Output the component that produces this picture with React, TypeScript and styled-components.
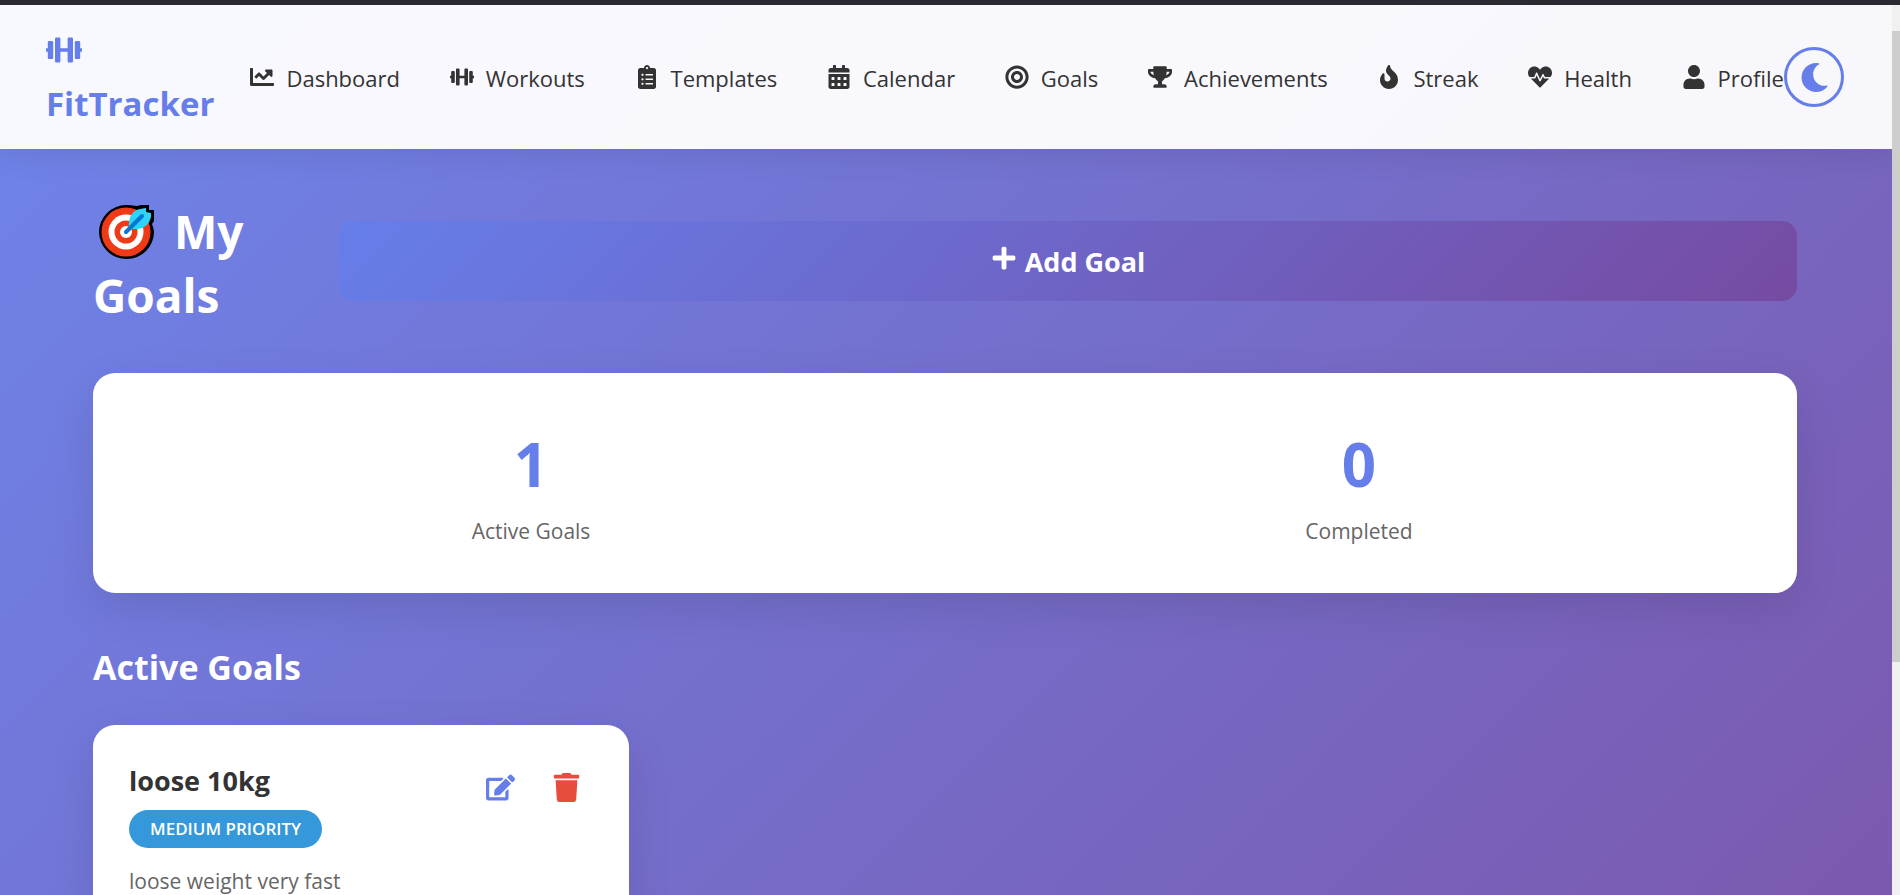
import React from 'react';
import styled, { createGlobalStyle } from 'styled-components';
import {
  FaBullseye, FaCalendarAlt, FaChartLine, FaClipboardList, FaDumbbell, FaEdit, FaFire,
  FaHeartbeat, FaMoon, FaPlus, FaTrash, FaTrophy, FaUser,
} from 'react-icons/fa';
import type { IconType } from 'react-icons';

const brand = '#667eea';

const GlobalStyle = createGlobalStyle`
  *, *::before, *::after { box-sizing: border-box; }
  body { margin: 0; font-family: 'Segoe UI', 'Open Sans', 'Noto Sans', sans-serif; color: #333; }
  h1, h2, h3, p, ul { margin: 0; padding: 0; }
  button { font-family: inherit; cursor: pointer; }
`;

const Screen = styled.div`
  display: flex;
  flex-direction: column;
  height: 100vh;
  overflow: hidden;
`;

const WindowEdge = styled.div`
  flex: 0 0 5px;
  background: #2b2a33;
`;

const Viewport = styled.div`
  flex: 1;
  min-height: 0;
  display: grid;
  grid-template-columns: minmax(0, 1fr) 8px;
`;

const Page = styled.div`
  overflow: hidden;
  background: linear-gradient(rgba(255, 255, 255, 0.05), rgba(255, 255, 255, 0.05)),
    linear-gradient(135deg, #667eea 0%, #764ba2 100%) 0 0 / 100% 138vh;
`;

const ScrollTrack = styled.div`
  background: #f0f0f0;
  padding-top: 26px;
`;

const ScrollThumb = styled.div`
  height: 73%;
  background: #cdcdcd;
`;

const Header = styled.header`
  display: flex;
  align-items: center;
  padding: 19px 48px 19px 46px;
  background: rgba(255, 255, 255, 0.95);
  box-shadow: 0 3px 30px rgba(0, 0, 0, 0.1);
`;

const Logo = styled.a`
  flex: 0 0 auto;
  display: flex;
  flex-direction: column;
  margin-right: 36px;
  color: ${brand};
  font-size: 33px;
  line-height: 53px;
  font-weight: 700;
  text-decoration: none;
`;

const LogoMark = styled.span`
  display: flex;
  align-items: center;
  height: 53px;
  font-size: 36px;

  svg { margin-bottom: 2px; }
`;

const NavList = styled.ul`
  flex: 1;
  display: flex;
  justify-content: space-between;
  list-style: none;
`;

const NavLink = styled.a`
  display: flex;
  align-items: center;
  gap: 12px;
  color: #333;
  font-size: 22px;
  line-height: 36px;
  text-decoration: none;

  svg { font-size: 24px; }
`;

const NavText = styled.span`
  padding-top: 2px;
`;

const ThemeToggle = styled.button`
  flex: 0 0 60px;
  height: 60px;
  display: grid;
  place-items: center;
  padding: 0;
  border: 3px solid ${brand};
  border-radius: 50%;
  background: transparent;
  color: ${brand};
  font-size: 29px;
`;

const Content = styled.main`
  padding: 46px 95px 46px 93px;
`;

const TitleRow = styled.div`
  display: flex;
  align-items: center;
  margin-bottom: 46px;
`;

const Title = styled.h1`
  flex: 0 0 246px;
  padding-top: 4px;
  color: #fff;
  font-size: 46px;
  line-height: 64px;
  font-weight: 700;

  svg { display: inline-block; vertical-align: -11px; margin: 0 6px 0 5px; }
`;

const TitleLine = styled.span`
  display: block;
`;

const AddButton = styled.button`
  flex: 1;
  display: flex;
  align-items: center;
  justify-content: center;
  gap: 8px;
  height: 80px;
  border: 0;
  border-radius: 15px;
  background: linear-gradient(135deg, #667eea 0%, #764ba2 100%);
  color: #fff;
  font-size: 27px;
  font-weight: 700;

  svg { margin-bottom: 6px; font-size: 26px; }
`;

const Card = styled.section`
  border-radius: 22px;
  background: #fff;
  box-shadow: 0 15px 45px rgba(0, 0, 0, 0.1);
`;

const StatsCard = styled(Card)`
  display: grid;
  grid-template-columns: 1fr 1fr;
  gap: 48px;
  padding: 48px;
  margin-bottom: 48px;
`;

const Stat = styled.div`
  display: flex;
  flex-direction: column;
  align-items: center;
`;

const StatValue = styled.strong`
  color: ${brand};
  font-size: 60px;
  line-height: 86px;
`;

const StatLabel = styled.span`
  padding-top: 10px;
  color: #666;
  font-size: 21px;
  line-height: 28px;
`;

const SectionTitle = styled.h2`
  padding-top: 2px;
  margin-bottom: 34px;
  color: #fff;
  font-size: 34px;
  line-height: 48px;
`;

const GoalGrid = styled.div`
  display: grid;
  grid-template-columns: repeat(3, 1fr);
  gap: 48px;
`;

const GoalCard = styled(Card)`
  padding: 36px;
  min-height: 400px;
`;

const GoalHead = styled.div`
  display: flex;
  justify-content: space-between;
  align-items: flex-start;
  margin-bottom: 15px;
`;

const GoalName = styled.h3`
  margin-bottom: 9px;
  font-size: 27px;
  line-height: 40px;
`;

const Badge = styled.span`
  display: block;
  padding: 0 21px;
  border-radius: 19px;
  background: #3498db;
  color: #fff;
  font-size: 17px;
  line-height: 38px;
  font-weight: 600;
  text-transform: uppercase;
`;

const GoalActions = styled.div`
  display: flex;
  gap: 12px;
`;

const IconButton = styled.button<{ $color: string }>`
  display: grid;
  place-items: center;
  width: 54px;
  height: 52px;
  padding: 0;
  border: 0;
  background: transparent;
  color: ${({ $color }) => $color};
  font-size: 29px;
`;

const GoalText = styled.p`
  color: #666;
  font-size: 21px;
  line-height: 36px;
`;

const navItems: { label: string; Icon: IconType }[] = [
  { label: 'Dashboard', Icon: FaChartLine },
  { label: 'Workouts', Icon: FaDumbbell },
  { label: 'Templates', Icon: FaClipboardList },
  { label: 'Calendar', Icon: FaCalendarAlt },
  { label: 'Goals', Icon: FaBullseye },
  { label: 'Achievements', Icon: FaTrophy },
  { label: 'Streak', Icon: FaFire },
  { label: 'Health', Icon: FaHeartbeat },
  { label: 'Profile', Icon: FaUser },
];

const stats = [
  { value: 1, label: 'Active Goals' },
  { value: 0, label: 'Completed' },
];

const TargetIcon = () => (
  <svg width="58" height="56" viewBox="0 0 58 56" aria-hidden="true">
    <path d="M28 1C34 1 37 2 39 2L43 1H51V6H56V17L54 20C55 23 56 26 56 28A27.500 27 0 1 1 28 1Z" fill="#000" />
    <circle cx="28" cy="28" r="24.500" fill="#f03a17" />
    <circle cx="28" cy="28" r="17.500" fill="#fff" />
    <circle cx="28" cy="28" r="11.500" fill="#f03a17" />
    <circle cx="28" cy="28" r="6" fill="#fff" />
    <path d="M31 24C30 14 34 6 42 5L48 4V8L53 9C54 18 47 26 36 25Z" fill="#31d2f7" />
    <path d="M28 28L44 12" stroke="#0078d4" strokeWidth="4" strokeLinecap="round" />
  </svg>
);

export default function App() {
  return (
    <Screen>
      <GlobalStyle />
      <WindowEdge />
      <Viewport>
        <Page>
          <Header>
            <Logo href="#home">
              <LogoMark><FaDumbbell /></LogoMark>
              FitTracker
            </Logo>
            <NavList>
              {navItems.map(({ label, Icon }) => (
                <li key={label}>
                  <NavLink href={`#${label.toLowerCase()}`}><Icon /><NavText>{label}</NavText></NavLink>
                </li>
              ))}
            </NavList>
            <ThemeToggle type="button" aria-label="Switch to dark theme"><FaMoon /></ThemeToggle>
          </Header>
          <Content>
            <TitleRow>
              <Title>
                <TitleLine><TargetIcon /> My</TitleLine>
                <TitleLine>Goals</TitleLine>
              </Title>
              <AddButton type="button"><FaPlus />Add Goal</AddButton>
            </TitleRow>
            <StatsCard>
              {stats.map(({ value, label }) => (
                <Stat key={label}>
                  <StatValue>{value}</StatValue>
                  <StatLabel>{label}</StatLabel>
                </Stat>
              ))}
            </StatsCard>
            <SectionTitle>Active Goals</SectionTitle>
            <GoalGrid>
              <GoalCard>
                <GoalHead>
                  <div>
                    <GoalName>loose 10kg</GoalName>
                    <Badge>Medium priority</Badge>
                  </div>
                  <GoalActions>
                    <IconButton type="button" $color={brand} aria-label="Edit goal"><FaEdit /></IconButton>
                    <IconButton type="button" $color="#e74c3c" aria-label="Delete goal"><FaTrash /></IconButton>
                  </GoalActions>
                </GoalHead>
                <GoalText>loose weight very fast</GoalText>
              </GoalCard>
            </GoalGrid>
          </Content>
        </Page>
        <ScrollTrack>
          <ScrollThumb />
        </ScrollTrack>
      </Viewport>
    </Screen>
  );
}
